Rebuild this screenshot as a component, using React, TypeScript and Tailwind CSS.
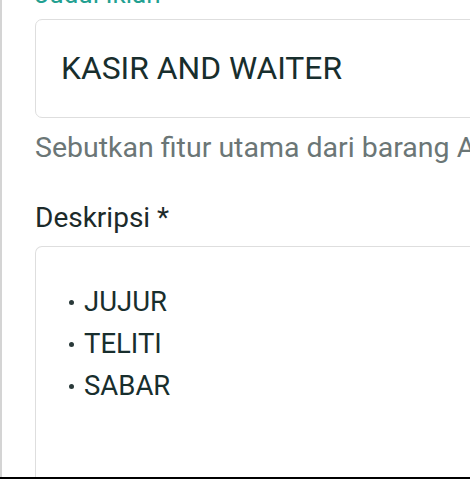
import React from "react";

function Bullet({ children }: { children: React.ReactNode }) {
  return (
    <div className="flex items-center h-[42px]">
      <span className="w-[5px] h-[5px] rounded-full bg-[#2a3a3a] mr-[10px] shrink-0" />
      <span>{children}</span>
    </div>
  );
}

export default function App() {
  return (
    <div className="w-[470px] h-[479px] overflow-hidden bg-white flex flex-col" style={{ fontFamily: "Roboto, 'Noto Sans', sans-serif" }}>
      <div className="flex flex-1 min-h-0">
        <div className="w-[2px] bg-[#d4d4d4] shrink-0" />
        <div className="flex-1 min-w-0 pl-[33px] flex flex-col overflow-hidden">
          <div className="mt-[-17px] h-[36px] text-[26px] leading-[22px] text-[#22a091] whitespace-nowrap">Judul Iklan</div>
          <div className="h-[99px] -mr-[20px] border-[1.5px] border-[#dedede] rounded-[7px] shrink-0 flex items-center pl-[25px]">
            <span className="text-[31.8px] text-[#182e2d] whitespace-nowrap">KASIR AND WAITER</span>
          </div>
          <div className="mt-[14px] text-[28.5px] leading-[32px] text-[#6b7676] whitespace-nowrap">Sebutkan fitur utama dari barang Anda</div>
          <div className="mt-[38px] text-[28px] leading-[32px] text-[#1c2a2a] whitespace-nowrap">Deskripsi *</div>
          <div className="mt-[12px] flex-1 -mr-[20px] border-[1.5px] border-b-0 border-[#dedede] rounded-t-[7px] pl-[33px] pt-[34px]">
            <div className="flex flex-col text-[27.5px] text-[#182e2d]">
              <Bullet>JUJUR</Bullet>
              <Bullet>TELITI</Bullet>
              <Bullet>SABAR</Bullet>
            </div>
          </div>
        </div>
      </div>
      <div className="h-[2px] bg-black shrink-0" />
    </div>
  );
}
